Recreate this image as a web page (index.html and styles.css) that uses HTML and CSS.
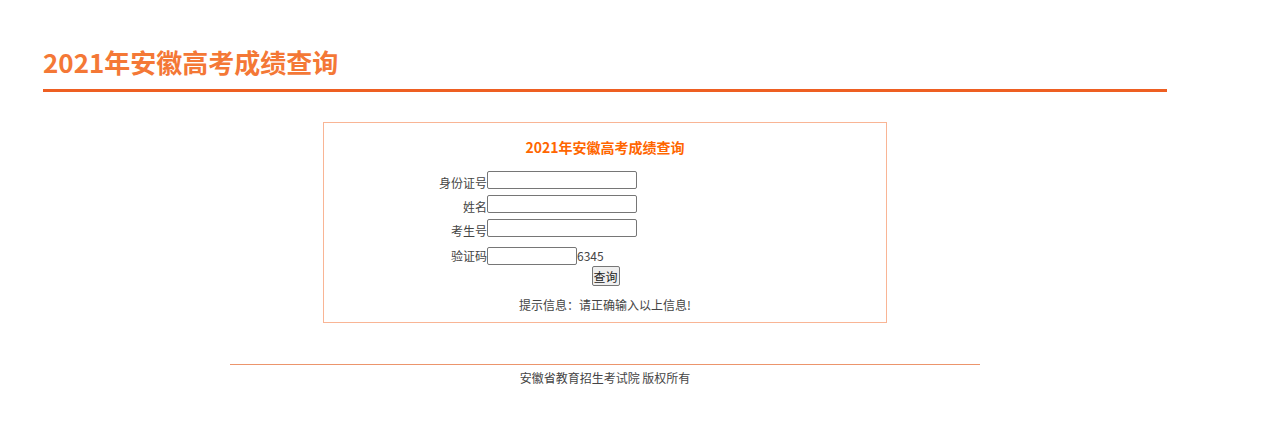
FILE: index.html
```html
<!DOCTYPE html>
<html lang="zh-CN">
<head>
    <meta charset="UTF-8">
    <title>2021年安徽高考成绩查询</title>
    <link rel="stylesheet" href="styles.css">
</head>
<body>
    <div class="wrap">
        <!-- 页头 -->
        <h1 class="page-title">2021年安徽高考成绩查询</h1>

        <!-- 查询框 -->
        <div class="query-box">
            <h2 class="box-title">2021年安徽高考成绩查询</h2>
            <form class="query-form" onsubmit="return false">
                <table class="form-table">
                    <tr>
                        <td class="label">身份证号</td>
                        <td><input type="text" class="input-field"></td>
                    </tr>
                    <tr>
                        <td class="label">姓名</td>
                        <td><input type="text" class="input-field"></td>
                    </tr>
                    <tr>
                        <td class="label">考生号</td>
                        <td><input type="text" class="input-field"></td>
                    </tr>
                    <tr class="code-row">
                        <td class="label">验证码</td>
                        <td><input type="text" class="input-field code-field"><span class="code">6345</span></td>
                    </tr>
                    <tr>
                        <td colspan="2" class="btn-cell"><button type="submit" class="query-btn">查询</button></td>
                    </tr>
                </table>
                <p class="tip">提示信息：请正确输入以上信息!</p>
            </form>
        </div>

        <!-- 页脚 -->
        <div class="footer">安徽省教育招生考试院 版权所有</div>
    </div>
</body>
</html>
```

FILE: styles.css
```css
/* Reset */
* {
    margin: 0;
    padding: 0;
    box-sizing: border-box;
}

body {
    font-family: "Noto Sans CJK SC", "Noto Sans", sans-serif;
    font-size: 12px;
    color: #444;
    background: #fff;
}

.wrap {
    width: 1124px;
    margin-left: 43px;
}

/* Header */
.page-title {
    font-size: 26px;
    font-weight: 700;
    color: #f47836;
    line-height: 34px;
    padding-top: 45px;
    padding-bottom: 10px;
    border-bottom: 3px solid #ee5f22;
}

/* Query Box */
.query-box {
    width: 564px;
    margin: 30px auto 0;
    border: 1px solid #f9b595;
    padding: 14px 0 7px;
}

.box-title {
    text-align: center;
    font-size: 14px;
    font-weight: 700;
    color: #ff6600;
    line-height: 20px;
    margin-bottom: 14px;
}

.form-table {
    margin: 0 auto;
    border-collapse: collapse;
    width: 334px;
}

.form-table td {
    padding: 0;
    height: 24px;
    vertical-align: top;
}

.form-table td.label {
    width: 49px;
    text-align: right;
    white-space: nowrap;
    line-height: 20px;
    padding-top: 2px;
}

.code-row td {
    padding-top: 4px !important;
}

.code-row td.label {
    line-height: 18px;
}

.input-field {
    width: 150px;
    height: 18px;
    border: 1px solid #767676;
    border-radius: 2px;
    vertical-align: top;
    font-size: 12px;
}

.code-field {
    width: 90px;
}

.code {
    line-height: 18px;
    vertical-align: top;
    display: inline-block;
}

.btn-cell {
    text-align: center;
}

.query-btn {
    font-family: "Noto Sans CJK SC", sans-serif;
    font-size: 12px;
    width: 28px;
    height: 20px;
    padding: 0;
    border: 1px solid #767676;
    border-radius: 2px;
    background: #efefef;
    color: #222;
    margin-left: 1px;
    margin-top: -1px;
}

.tip {
    text-align: center;
    line-height: 20px;
    margin-top: 4px;
}

/* Footer */
.footer {
    width: 750px;
    margin: 41px auto 0;
    border-top: 1px solid #ec956c;
    text-align: center;
    line-height: 24px;
    padding-top: 1px;
}
```
